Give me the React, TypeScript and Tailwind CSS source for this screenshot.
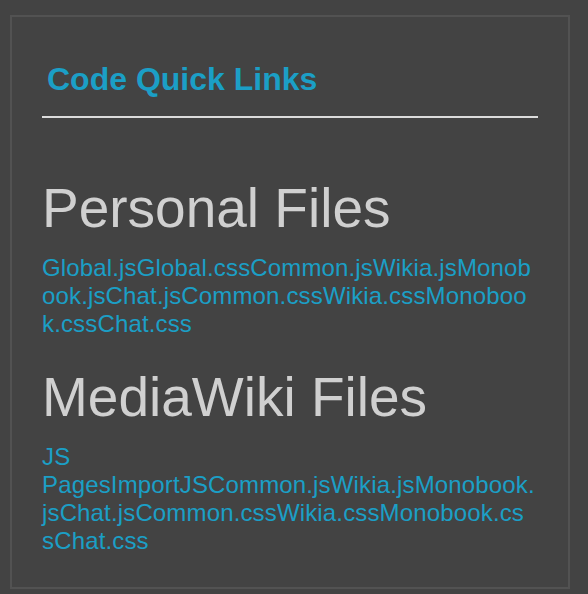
const personalFiles = ['Global.js', 'Global.css', 'Common.js', 'Wikia.js', 'Monobook.js', 'Chat.js', 'Common.css', 'Wikia.css', 'Monobook.css', 'Chat.css'];
const mediaWikiFiles = ['JS Pages', 'ImportJS', 'Common.js', 'Wikia.js', 'Monobook.js', 'Chat.js', 'Common.css', 'Wikia.css', 'Monobook.css', 'Chat.css'];

function FileSection({ title, files, className }: { title: string; files: string[]; className: string }) {
  return (
    <section className={className}>
      <h2 className="text-[55px] leading-[64px] font-normal text-[#d0d0d0]">{title}</h2>
      <div className="mt-[14px] w-[493.5px] text-[24px] leading-[28px] tracking-[0.15px] text-[#1b9fc6] wrap-break-word">
        {files.map((file) => (
          <a key={file} href="#" className="hover:underline">
            {file}
          </a>
        ))}
      </div>
    </section>
  );
}

export default function App() {
  return (
    <div className="min-h-[594px] bg-[#434343] pt-[15px] pl-[10px] font-['Liberation_Sans',Arial,sans-serif]">
      <div className="w-[560px] h-[574px] border-2 border-[#525252] px-[30px] pt-[45px]">
        <h1 className="pl-[5px] text-[32px] leading-[34px] font-bold text-[#1b9fc6]">Code Quick Links</h1>
        <div className="mt-[20px] h-[2px] bg-[#dcdcdc]" />
        <FileSection title="Personal Files" files={personalFiles} className="mt-[58px]" />
        <FileSection title="MediaWiki Files" files={mediaWikiFiles} className="mt-[27px]" />
      </div>
    </div>
  );
}
